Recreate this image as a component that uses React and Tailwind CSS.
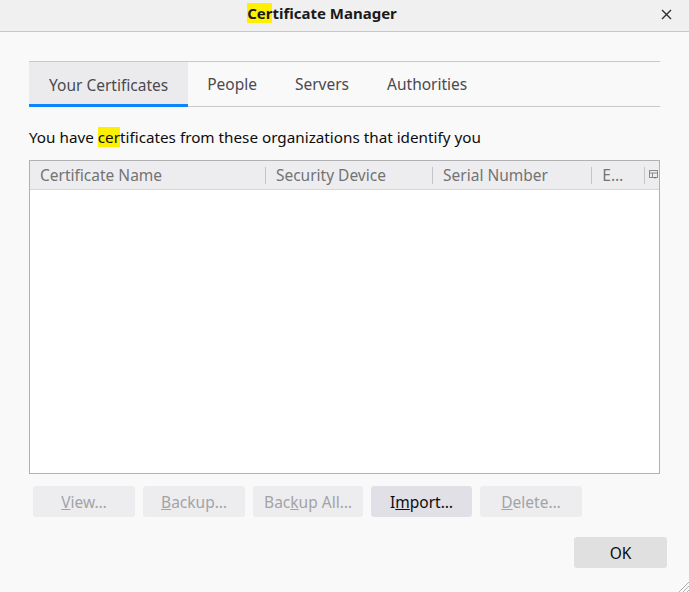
import React from 'react';

const font = { fontFamily: '"Noto Sans", "DejaVu Sans", sans-serif' };

function Hl({ children }) {
  return <span className="bg-[#fff000]">{children}</span>;
}

function Btn({ children, enabled, className = '' }) {
  return (
    <div
      className={`flex h-[31px] items-center justify-center rounded-[3px] pt-[2px] text-[15.5px] ${
        enabled ? 'bg-[#e0e0e6] text-[#0c0c0d]' : 'bg-[#ededf0] text-[#a3a3a6]'
      } ${className}`}
    >
      {children}
    </div>
  );
}

export default function App() {
  const tabs = ['Your Certificates', 'People', 'Servers', 'Authorities'];
  const cols = [
    { label: 'Certificate Name', w: 'w-[236px]' },
    { label: 'Security Device', w: 'w-[168px]' },
    { label: 'Serial Number', w: 'w-[160px]' },
    { label: 'E…', w: 'w-[53px]' },
  ];

  return (
    <div style={font} className="relative flex h-[592px] w-[689px] flex-col overflow-hidden bg-[#f9f9f9] text-[#0c0c0d]">
      {/* title bar */}
      <div className="relative flex h-[32px] shrink-0 items-center justify-center border-b border-[#c8c8c8] bg-[#f0f0f0] pb-[4px] pr-[45px]">
        <span className="text-[15px] font-bold text-[#1a1a1a]">
          <Hl>Cer</Hl>tificate Manager
        </span>
        <svg className="absolute right-[17px] top-[9px]" width="11" height="11" viewBox="0 0 11 11">
          <path d="M1 1 L10 10 M10 1 L1 10" stroke="#2e2e2e" strokeWidth="1.4" />
        </svg>
      </div>

      <div className="flex flex-1 flex-col px-[29px] pt-[29px]">
        {/* tabs */}
        <div className="flex h-[46px] border-y border-[#c8c8cc]">
          {tabs.map((t, i) => (
            <div
              key={t}
              className={`flex items-center text-[15.5px] text-[#4a4a4f] ${
                i === 0
                  ? 'border-b-[3px] border-[#0a84ff] bg-[#ebebee] px-[20px] pt-[5px] -mb-px'
                  : 'px-[19px] pt-[2px]'
              }`}
            >
              {t}
            </div>
          ))}
        </div>

        <p className="mt-[20px] text-[15.25px] leading-[20px]">
          You have <Hl>cer</Hl>tificates from these organizations that identify you
        </p>

        {/* tree */}
        <div className="mt-[13px] flex h-[314px] flex-col border border-[#b1b1b3] bg-white">
          <div className="flex h-[29px] shrink-0 items-center border-b border-[#d7d7db] bg-[#ededf0] text-[15.5px] text-[#737373]">
            {cols.map((c, i) => (
              <div
                key={c.label}
                className={`flex h-full items-center ${c.w} ${i === 0 ? 'pl-[10px]' : ''}`}
              >
                {i > 0 && <span className="mr-[10px] h-[17px] border-l border-[#c4c4c6]" />}
                <span className="pt-[2px]">{c.label}</span>
              </div>
            ))}
            <div className="flex h-full flex-1 items-center">
              <span className="mr-[4px] h-[17px] border-l border-[#c4c4c6]" />
              <svg width="10" height="10" viewBox="0 0 10 10">
                <rect x="0.5" y="0.5" width="8" height="7" fill="none" stroke="#8a8a8a" />
                <path d="M0.5 3 H8.5 M3.5 3 V7.5" stroke="#8a8a8a" />
                <path d="M5 7 L7 7 L6 9 Z" fill="#6a6a6a" />
              </svg>
            </div>
          </div>
          <div className="flex-1" />
        </div>

        {/* buttons */}
        <div className="mt-[12px] flex gap-[8px] pl-[4px]">
          <Btn className="w-[102px]"><span><u>V</u>iew…</span></Btn>
          <Btn className="w-[102px]"><span><u>B</u>ackup…</span></Btn>
          <Btn className="w-[110px]"><span>Bac<u>k</u>up All…</span></Btn>
          <Btn enabled className="w-[101px]"><span>I<u>m</u>port…</span></Btn>
          <Btn className="w-[102px]"><span><u>D</u>elete…</span></Btn>
        </div>

        <div className="mt-[20px] flex justify-end">
          <div className="-mr-[7px] flex h-[31px] w-[93px] items-center justify-center rounded-[3px] bg-[#e0e0e0] pt-[2px] text-[15.5px] text-[#0c0c0d]">
            OK
          </div>
        </div>
      </div>

      <svg className="absolute bottom-0 right-0" width="12" height="12" viewBox="0 0 12 12">
        <path d="M12 2 L2 12 M12 6 L6 12 M12 10 L10 12" stroke="#b0b0b0" strokeWidth="1" />
      </svg>
    </div>
  );
}
